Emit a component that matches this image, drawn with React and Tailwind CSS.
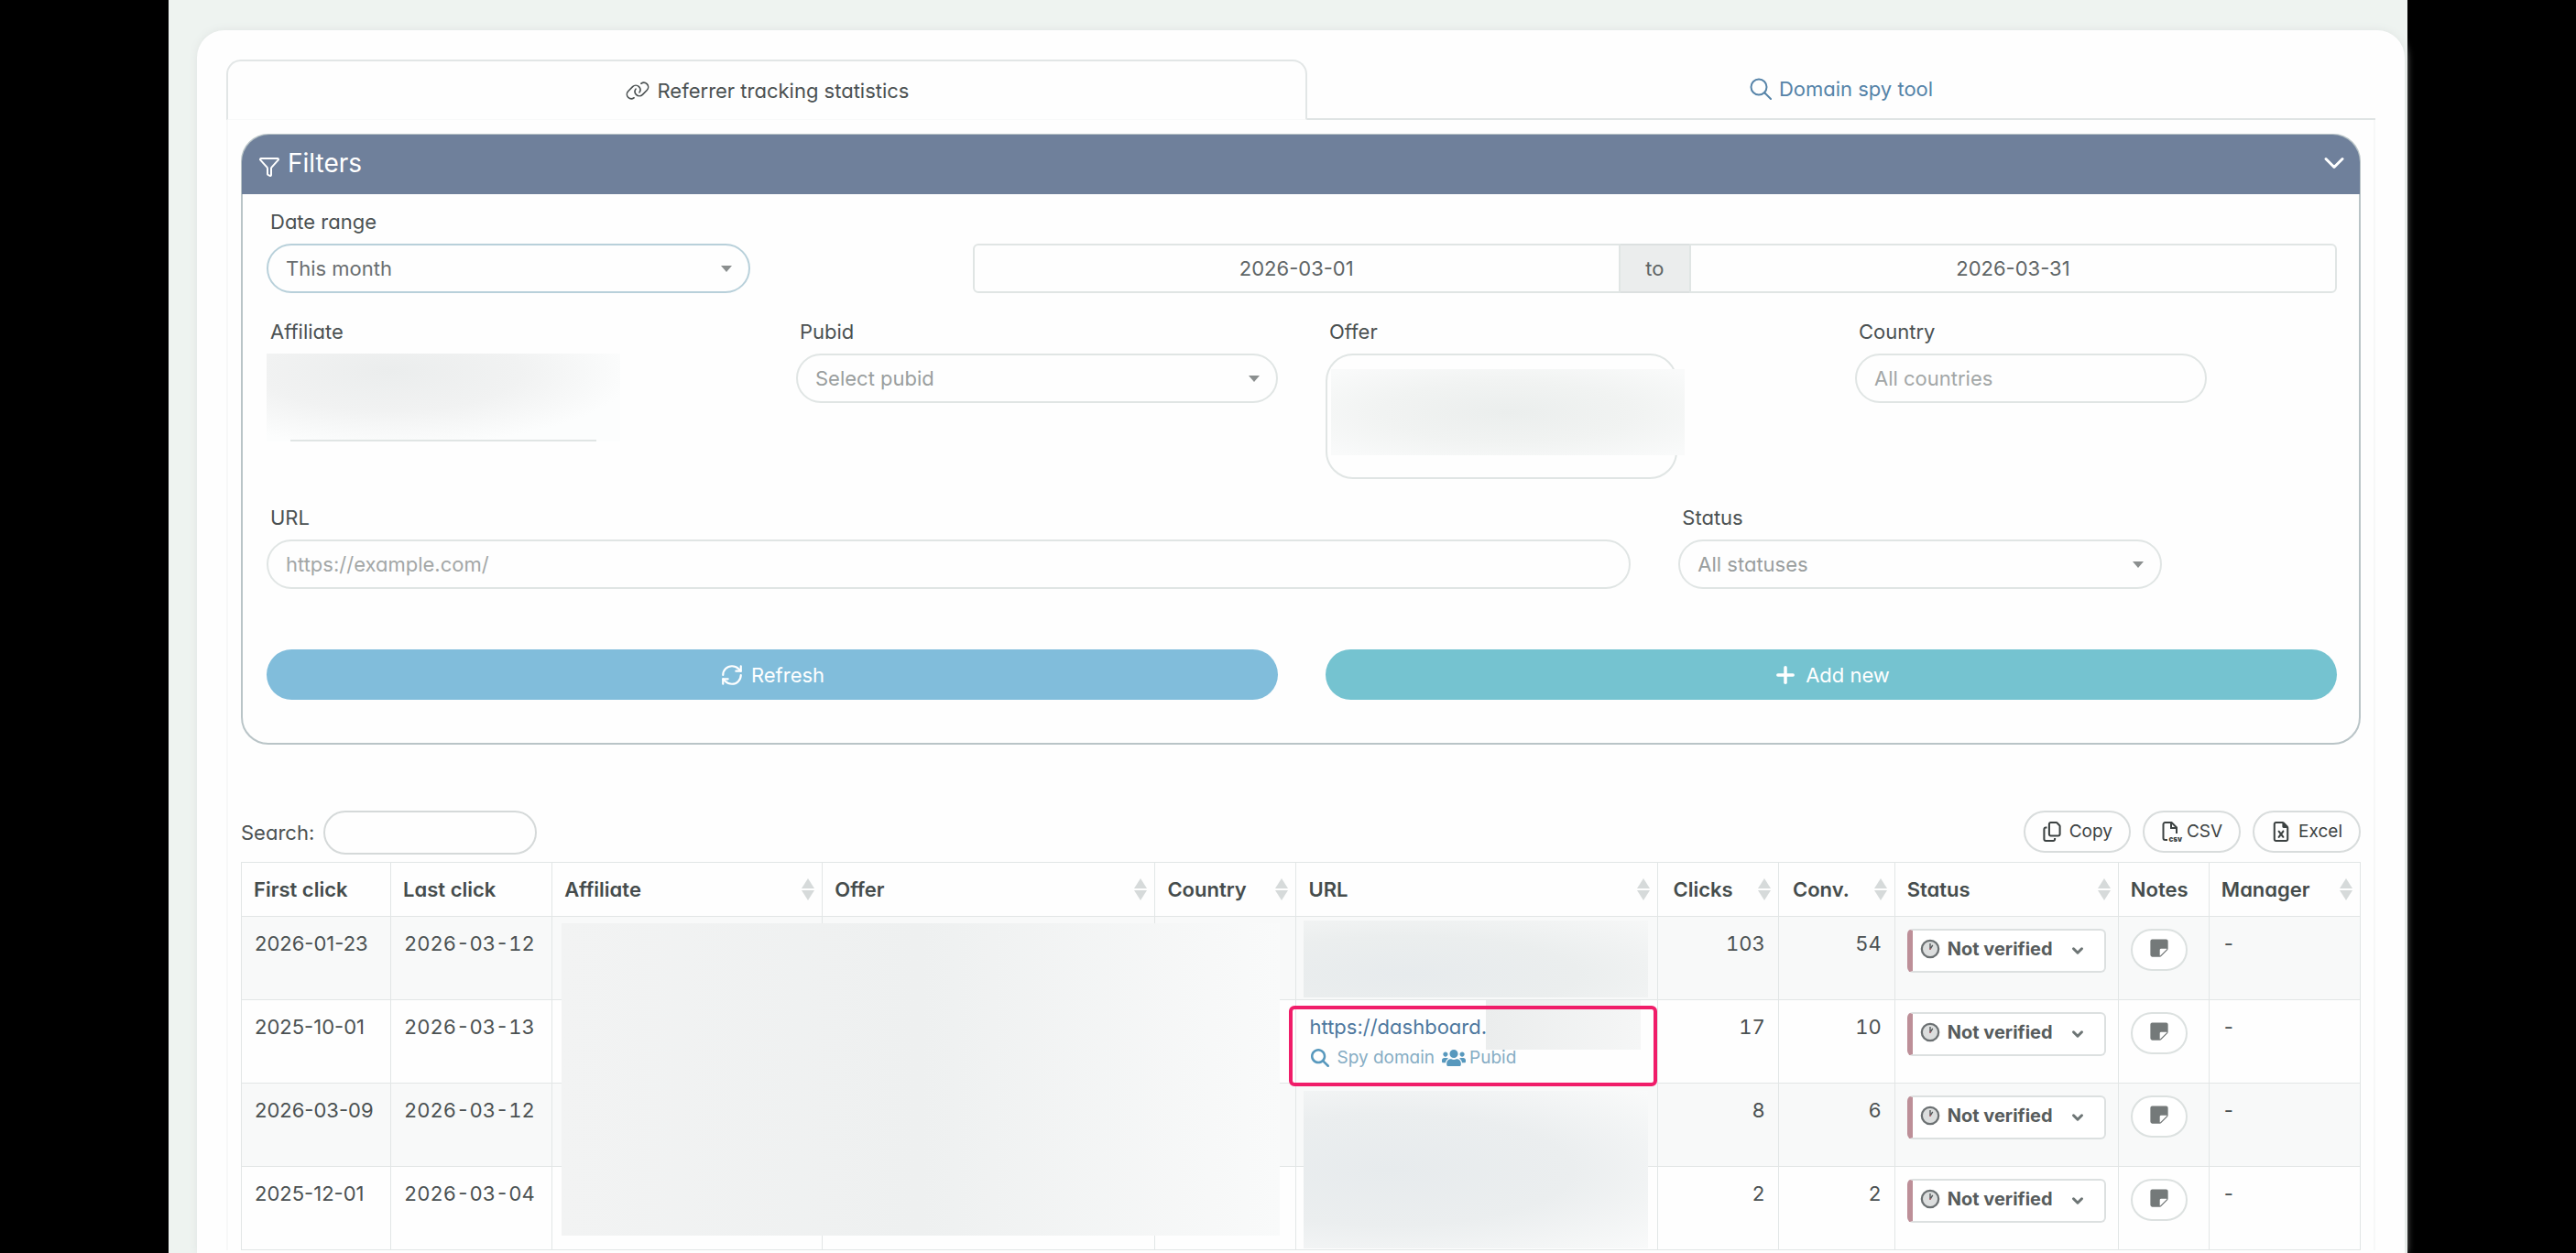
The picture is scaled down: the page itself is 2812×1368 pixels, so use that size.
import React, { useState } from "react";
import { ChevronDown, Filter, Plus, RefreshCw } from "lucide-react";
import { BsChevronDown, BsStickyFill } from "react-icons/bs";
import { FaUsers } from "react-icons/fa";
import { FaMagnifyingGlass, FaRegCopy, FaRegFileExcel } from "react-icons/fa6";

const rows = [
  { id: 1, first: "2026-01-23", last: "2026-03-12", clicks: 103, conv: 54 },
  { id: 2, first: "2025-10-01", last: "2026-03-13", clicks: 17, conv: 10, url: "https://dashboard." },
  { id: 3, first: "2026-03-09", last: "2026-03-12", clicks: 8, conv: 6 },
  { id: 4, first: "2025-12-01", last: "2026-03-04", clicks: 2, conv: 2 },
];

const columns = [
  { name: "First click", width: "w-[163px]" },
  { name: "Last click", width: "w-[176px]" },
  { name: "Affiliate", width: "w-[295px]", sort: true },
  { name: "Offer", width: "w-[363px]", sort: true },
  { name: "Country", width: "w-[154px]", sort: true },
  { name: "URL", width: "w-[394px]", sort: true },
  { name: "Clicks", width: "w-[132px]", sort: true, right: true },
  { name: "Conv.", width: "w-[127px]", sort: true, right: true },
  { name: "Status", width: "w-[244px]", sort: true },
  { name: "Notes", width: "w-[99px]" },
  { name: "Manager", width: "w-[165px]", sort: true },
];

const LinkIcon = () => (
  <svg viewBox="0 0 640 512" className="h-[22px] w-7" fill="none" stroke="currentColor" strokeWidth="38" strokeLinecap="round">
    <path d="M411 75C455 43 518 49 557 86C601 130 601 201 557 245L445 357C401 401 330 401 286 357C247 318 242 257 274 212" />
    <path d="M229 437C185 469 122 463 83 426C39 382 39 311 83 267L195 155C239 111 310 111 354 155C393 194 398 255 366 300" />
  </svg>
);

const SearchIcon = () => (
  <svg viewBox="0 0 24 24" className="size-6" fill="none" stroke="currentColor" strokeWidth="2" strokeLinecap="round">
    <circle cx="10" cy="10" r="8.5" />
    <path d="M16.5 16.5L23 23" />
  </svg>
);

const CsvIcon = () => (
  <svg viewBox="0 0 24 24" className="size-6" fill="none" stroke="currentColor" strokeWidth="2">
    <path d="M7 21H4.500A2 2 0 0 1 2.500 19V4A2 2 0 0 1 4.500 2H11.500L17 7.500V14" />
    <path d="M11 2V8H17" />
    <text x="8.500" y="22.500" fontSize="8" fontWeight="900" fill="currentColor" stroke="none">csv</text>
  </svg>
);

const ClockIcon = () => (
  <svg viewBox="0 0 24 24" className="size-[22px] shrink-0">
    <circle cx="12" cy="12" r="10" fill="#dcdede" stroke="#6b7072" strokeWidth="2.500" />
    <path d="M12 12.500V5.500M12 12.500L15 7.500" stroke="#55595b" strokeWidth="1.500" />
    <circle cx="12" cy="12" r="1" fill="#b5606c" />
  </svg>
);

const Caret = () => (
  <svg viewBox="0 0 12 7" className="pointer-events-none h-[7px] w-3 shrink-0">
    <path d="M0 0H12L6 7Z" fill="#8b8f8f" />
  </svg>
);

const SortIcon = () => (
  <svg viewBox="0 0 14 24" className="h-6 w-[14px] shrink-0" fill="#d6dada">
    <path d="M7 0L14 11H0Z" />
    <path d="M7 24L0 13H14Z" />
  </svg>
);

const FilterSelect = ({ id, label, value, className, color = "border-[#e0e5e4] text-[#9a9e9e]" }) => (
  <div>
    <label htmlFor={id} className="block pb-2 pl-1">
      {label}
    </label>
    <div className={`flex h-[54px] w-full items-center rounded-full border-2 pr-[18px] pl-[19px] ${color} ${className}`}>
      <select id={id} className="h-full flex-1 appearance-none outline-none">
        <option>{value}</option>
      </select>
      <Caret />
    </div>
  </div>
);

const UrlCell = ({ row }) => {
  if (row.url) {
    return (
      <td className="relative border border-[#e2e6e6] px-[14px] pt-[13px] align-top">
        <a href="#url" className="block text-[#4d789e]">
          {row.url}
        </a>
        <div className="flex items-center gap-2 pl-[2px] text-[19px] leading-9 text-[#86adc4]">
          <a href="#spy" className="flex items-center gap-2">
            <FaMagnifyingGlass className="size-5 text-[#5798bd]" /> Spy domain
          </a>
          <a href="#pubid" className="flex items-center gap-1">
            <FaUsers className="size-[26px] text-[#5798bd]" /> Pubid
          </a>
        </div>
        {/* hidden part of the address */}
        <div className="absolute top-0 left-[207px] h-[54px] w-[169px] bg-linear-to-r from-[#ebeded] to-[#f5f6f6]" />
        <div className="absolute top-[6px] right-0 -bottom-1 -left-2 rounded-md border-4 border-[#f01d69]" />
      </td>
    );
  }

  return (
    <td className="relative border border-[#e2e6e6]">
      {row.id === 1 && (
        <div className="absolute top-1 left-2 h-[84px] w-[376px] bg-[radial-gradient(ellipse_at_30%_70%,#e7ebed_0%,#ebeeee_50%,#f6f7f7_100%)]" />
      )}
      {row.id === 3 && (
        <div className="absolute top-2 left-2 h-[172px] w-[376px] bg-[radial-gradient(ellipse_at_25%_50%,#e7ebed_0%,#ebeeef_50%,#f9fafa_100%)]" />
      )}
    </td>
  );
};

export default function App() {
  const [search, setSearch] = useState("");

  return (
    <div className="flex min-h-screen bg-black px-46 font-[Inter,sans-serif] text-[22px] leading-8 text-[#4b5152] [font-feature-settings:'cv11']">
      <div className="flex-1 bg-[#eef3f0] pt-[33px] pr-[3px] pl-[31px]">
        <div className="min-h-full rounded-t-[30px] bg-[#fefefe] px-8 pt-8 shadow-[0_0_10px_#dfe4e2]">
          <nav className="grid grid-cols-[1179fr_1165fr]">
            <a
              href="#stats"
              className="flex h-[66px] items-center justify-center gap-2 rounded-t-2xl border-2 border-b border-[#e2e6e6] border-b-[#f8f9f9]"
            >
              <LinkIcon /> Referrer tracking statistics
            </a>
            <a
              href="#spy-tool"
              className="flex h-[66px] items-center justify-center gap-2 border-b-2 border-[#dfe4e4] text-[#5583a8]"
            >
              <SearchIcon /> Domain spy tool
            </a>
          </nav>

          <main className="border-x-2 border-[#f7f8f8] px-[14px] pt-[15px]">
            <section className="rounded-[30px] border-2 border-[#b9c4c7]">
              <h2 className="-mx-px -mt-px flex h-[65px] items-center gap-2 rounded-t-[30px] bg-[#6f809b] pr-4 pb-1 pl-[18px] text-[28px] text-white">
                <Filter className="mt-2 size-6" strokeWidth={2} />
                <span className="flex-1">Filters</span>
                <button type="button" aria-label="Toggle filters">
                  <BsChevronDown className="size-6" strokeWidth={1} />
                </button>
              </h2>

              <form className="flex flex-col gap-[26px] pt-[14px] pr-6 pb-[47px] pl-[26px]">
                <div className="grid grid-cols-12 gap-x-[52px]">
                  <div className="col-span-4">
                    <FilterSelect
                      id="range"
                      label="Date range"
                      value="This month"
                      className="max-w-[528px]"
                      color="border-[#b8d0da] text-[#6a6f70]"
                    />
                  </div>
                  <div className="col-span-8 flex h-[54px] self-end text-[#5f6566]">
                    <input
                      aria-label="From"
                      defaultValue="2026-03-01"
                      className="min-w-0 flex-1 rounded-l-md border-2 border-[#e0e5e4] text-center"
                    />
                    <span className="flex w-[75px] items-center justify-center border-y-2 border-[#dce0e0] bg-[#ebeded]">
                      to
                    </span>
                    <input
                      aria-label="To"
                      defaultValue="2026-03-31"
                      className="min-w-0 flex-1 rounded-r-md border-2 border-[#e0e5e4] text-center"
                    />
                  </div>
                </div>

                <div className="grid grid-cols-4 gap-x-[52px]">
                  <div>
                    <p className="pb-2 pl-1">Affiliate</p>
                    <div className="h-[96px] w-full max-w-[386px] bg-[radial-gradient(ellipse_at_35%_20%,#ebeded_0%,#f1f2f2_40%,#fcfdfd_75%)]">
                      <div className="mx-[26px] h-full border-b-2 border-[#e0e5e4]" />
                    </div>
                  </div>
                  <FilterSelect id="pubid" label="Pubid" value="Select pubid" className="" />
                  <div>
                    <p className="pb-2 pl-1">Offer</p>
                    <div className="h-[137px] w-full max-w-[384px] rounded-[30px] border-2 border-[#e0e5e4] pt-[15px] pl-1">
                      <div className="h-[94px] w-[386px] bg-[radial-gradient(ellipse_at_center,#ebeeed_0%,#f1f3f2_50%,#f9fafa_95%)]" />
                    </div>
                  </div>
                  <div>
                    <label htmlFor="country" className="block pb-2 pl-1">
                      Country
                    </label>
                    <input
                      id="country"
                      placeholder="All countries"
                      className="h-[54px] w-full max-w-[384px] rounded-full border-2 border-[#e0e5e4] px-[19px] placeholder:text-[#a3a7a7]"
                    />
                  </div>
                </div>

                <div className="grid grid-cols-12 gap-x-[52px]">
                  <div className="col-span-8">
                    <label htmlFor="url" className="block pb-2 pl-1">
                      URL
                    </label>
                    <input
                      id="url"
                      placeholder="https://example.com/"
                      className="h-[54px] w-full rounded-full border-2 border-[#e0e5e4] px-[19px] placeholder:text-[#a3a7a7]"
                    />
                  </div>
                  <div className="col-span-4">
                    <FilterSelect id="status" label="Status" value="All statuses" className="max-w-[528px]" />
                  </div>
                </div>

                <div className="grid grid-cols-2 gap-x-[52px] pt-10 text-white">
                  <button type="button" className="flex h-[55px] items-center justify-center gap-2 rounded-full bg-[#81bddb]">
                    <RefreshCw className="size-[26px]" strokeWidth={2} /> Refresh
                  </button>
                  <button type="button" className="flex h-[55px] items-center justify-center gap-2 rounded-full bg-[#75c3d0]">
                    <Plus className="size-7" strokeWidth={3} /> Add new
                  </button>
                </div>
              </form>
            </section>

            <div className="mt-[72px] mb-2 flex justify-between">
              <div className="flex items-center gap-[10px]">
                <label htmlFor="search">Search:</label>
                <input
                  id="search"
                  value={search}
                  onChange={(e) => setSearch(e.target.value)}
                  className="h-12 w-[233px] rounded-full border-2 border-[#d5d9d9] px-4"
                />
              </div>
              <div className="flex gap-[13px] text-[19px] text-[#3c4242]">
                <button type="button" className="flex h-[46px] items-center gap-2 rounded-full border-2 border-[#d8dcdc] px-[18px]">
                  <FaRegCopy className="size-[22px]" /> Copy
                </button>
                <button type="button" className="flex h-[46px] items-center gap-1 rounded-full border-2 border-[#d8dcdc] px-[18px]">
                  <CsvIcon /> CSV
                </button>
                <button type="button" className="flex h-[46px] items-center gap-2 rounded-full border-2 border-[#d8dcdc] px-[18px]">
                  <FaRegFileExcel className="size-[22px]" /> Excel
                </button>
              </div>
            </div>

            <table className="w-full table-fixed border-collapse text-[#4b5152]">
              <thead>
                <tr className="h-[59px]">
                  {columns.map((col) => (
                    <th key={col.name} className={`border border-[#e2e6e6] pr-2 pl-[13px] text-left font-semibold text-[#454c4c] ${col.width}`}>
                      <div className={`flex items-center ${col.right ? "justify-end gap-[27px]" : "justify-between"}`}>
                        {col.name}
                        {col.sort && <SortIcon />}
                      </div>
                    </th>
                  ))}
                </tr>
              </thead>
              <tbody>
                {rows.map((row) => (
                  <tr key={row.id} className="h-[91px] align-top odd:bg-[#f8f9f9]">
                    <td className="border border-[#e2e6e6] px-[14px] pt-[13px]">{row.first}</td>
                    <td className="border border-[#e2e6e6] px-[14px] pt-[13px] [font-feature-settings:'cv11','tnum']">{row.last}</td>
                    <td className="relative border border-[#e2e6e6]">
                      {/* one mask lies over the affiliate, offer and country cells */}
                      {row.id === 1 && (
                        <div className="absolute top-[7px] left-[10px] z-10 h-[341px] w-[784px] bg-linear-to-r from-[#f2f3f3] via-[#eef0f0] to-[#f9fafa]" />
                      )}
                    </td>
                    <td className="border border-[#e2e6e6]"></td>
                    <td className="border border-[#e2e6e6]"></td>
                    <UrlCell row={row} />
                    <td className="border border-[#e2e6e6] px-[14px] pt-[13px] text-right [font-feature-settings:'cv11','tnum']">
                      {row.clicks}
                    </td>
                    <td className="border border-[#e2e6e6] px-[14px] pt-[13px] text-right [font-feature-settings:'cv11','tnum']">
                      {row.conv}
                    </td>
                    <td className="border border-[#e2e6e6] px-[13px] pt-[13px]">
                      <div className="flex h-12 items-center gap-2 rounded-md border-2 border-l-[6px] border-[#dce0e0] border-l-[#bd8f98] bg-white pr-5 pb-1 pl-2">
                        <ClockIcon />
                        <select
                          aria-label="Verification status"
                          className="min-w-0 flex-1 appearance-none text-xl font-bold text-[#575c5c] outline-none"
                        >
                          <option>Not verified</option>
                        </select>
                        <ChevronDown className="pointer-events-none mt-1 size-[18px] text-[#6d7575]" strokeWidth={4} />
                      </div>
                    </td>
                    <td className="border border-[#e2e6e6] px-[13px] pt-[13px]">
                      <button
                        type="button"
                        aria-label="Notes"
                        className="flex h-[46px] w-[62px] items-center justify-center rounded-full border-2 border-[#dce1e0] bg-white pb-1 text-[#747979]"
                      >
                        <BsStickyFill className="size-[22px]" />
                      </button>
                    </td>
                    <td className="border border-[#e2e6e6] px-4 pt-[13px]">-</td>
                  </tr>
                ))}
              </tbody>
            </table>
          </main>
        </div>
      </div>
    </div>
  );
}
